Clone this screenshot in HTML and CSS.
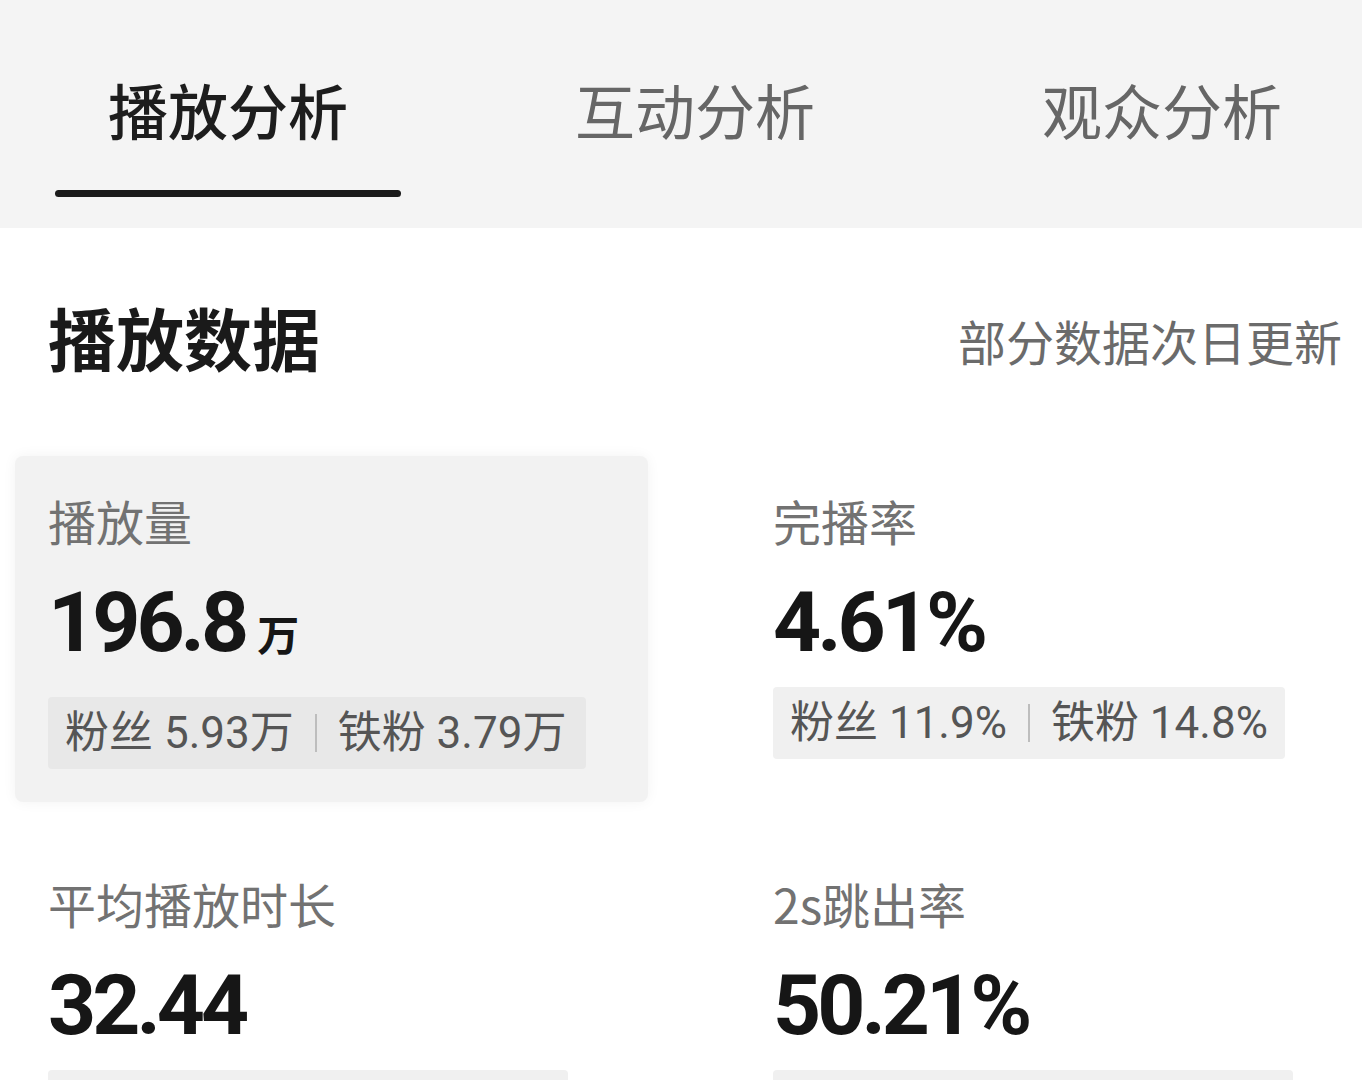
FILE: index.html
```html
<!DOCTYPE html>
<html lang="zh-CN">
<head>
<meta charset="utf-8">
<title>播放分析</title>
<link rel="stylesheet" href="styles.css">
</head>
<body>
<div class="page">
  <nav class="tabs">
    <div class="tab active"><span class="tab-label">播放分析</span><span class="tab-bar"></span></div>
    <div class="tab"><span class="tab-label">互动分析</span><span class="tab-bar"></span></div>
    <div class="tab"><span class="tab-label">观众分析</span><span class="tab-bar"></span></div>
  </nav>

  <section class="content">
    <header class="section-head">
      <h1 class="section-title">播放数据</h1>
      <span class="section-note">部分数据次日更新</span>
    </header>

    <div class="metrics">
      <div class="metric selected">
        <div class="metric-label">播放量</div>
        <div class="metric-value">196.8<span class="unit">万</span></div>
        <div class="pill"><span>粉丝 5.93万</span><i class="sep"></i><span>铁粉 3.79万</span></div>
      </div>
      <div class="metric">
        <div class="metric-label">完播率</div>
        <div class="metric-value">4.61%</div>
        <div class="pill"><span>粉丝 11.9%</span><i class="sep"></i><span>铁粉 14.8%</span></div>
      </div>
      <div class="metric">
        <div class="metric-label">平均播放时长</div>
        <div class="metric-value">32.44</div>
        <div class="pill pill-empty"></div>
      </div>
      <div class="metric">
        <div class="metric-label">2s跳出率</div>
        <div class="metric-value">50.21%</div>
        <div class="pill pill-empty"></div>
      </div>
    </div>
  </section>
</div>
</body>
</html>
```

FILE: styles.css
```css
* { box-sizing: border-box; }

html, body {
  margin: 0;
  padding: 0;
  background: #ffffff;
}

body {
  width: 1362px;
  height: 1080px;
  overflow: hidden;
  font-family: "Noto Sans CJK SC", "Noto Sans", sans-serif;
  color: #1a1a1a;
}

.tabs {
  display: flex;
  align-items: flex-start;
  height: 228px;
  padding-left: 55px;
  gap: 121px;
  background: #f4f4f4;
}

.tab {
  display: flex;
  flex-direction: column;
  align-items: stretch;
  padding: 79px 53px 0;
}

.tab-label {
  font-size: 60px;
  line-height: 60px;
  color: #666666;
  font-weight: 400;
  white-space: nowrap;
}

.tab-bar {
  display: block;
  height: 7px;
  margin: 51px -53px 0;
  border-radius: 4px;
  background: transparent;
}

.tab.active .tab-label {
  color: #1d1d1d;
  font-weight: 500;
}

.tab.active .tab-bar {
  background: #1b1b1b;
}

.content {
  padding: 75px 20px 0 0;
}

.section-head {
  display: flex;
  align-items: center;
  justify-content: space-between;
  padding-left: 48px;
}

.section-title {
  margin: 0;
  font-size: 68px;
  line-height: 68px;
  font-weight: 700;
  color: #1a1a1a;
}

.section-note {
  font-size: 48px;
  line-height: 48px;
  color: #6b6b6b;
  margin-top: 6px;
}

.metrics {
  display: grid;
  grid-template-columns: 633px 1fr;
  column-gap: 92px;
  row-gap: 37px;
  margin-top: 85px;
  padding-left: 15px;
}

.metric {
  display: flex;
  flex-direction: column;
  align-items: flex-start;
  padding: 40px 0 33px 33px;
  border-radius: 8px;
}

.metric.selected {
  background: #f2f2f2;
  box-shadow: 0 0 14px rgba(0, 0, 0, 0.05);
}

.metric-label {
  font-size: 48px;
  line-height: 48px;
  color: #727272;
  white-space: nowrap;
}

.metric-value {
  margin-top: 37px;
  font-family: Roboto, "Noto Sans CJK SC", sans-serif;
  font-size: 84px;
  line-height: 84px;
  font-weight: 700;
  letter-spacing: -4px;
  color: #161616;
  white-space: nowrap;
}

.unit {
  font-family: "Noto Sans CJK SC", sans-serif;
  font-size: 42px;
  font-weight: 700;
  letter-spacing: 0;
  margin-left: 12px;
}

.pill {
  display: inline-flex;
  align-items: center;
  height: 72px;
  margin-top: 22px;
  padding: 0 17px;
  border-radius: 4px;
  background: #f0f0f0;
  font-family: Roboto, "Noto Sans CJK SC", sans-serif;
  font-size: 44px;
  line-height: 44px;
  color: #555555;
  white-space: nowrap;
}

.metric.selected .pill {
  background: #e8e8e8;
  padding-right: 20px;
}

.pill-empty {
  width: 520px;
}

.sep {
  display: inline-block;
  width: 2px;
  height: 38px;
  margin: 0 21px;
  background: #bdbdbd;
}
```
